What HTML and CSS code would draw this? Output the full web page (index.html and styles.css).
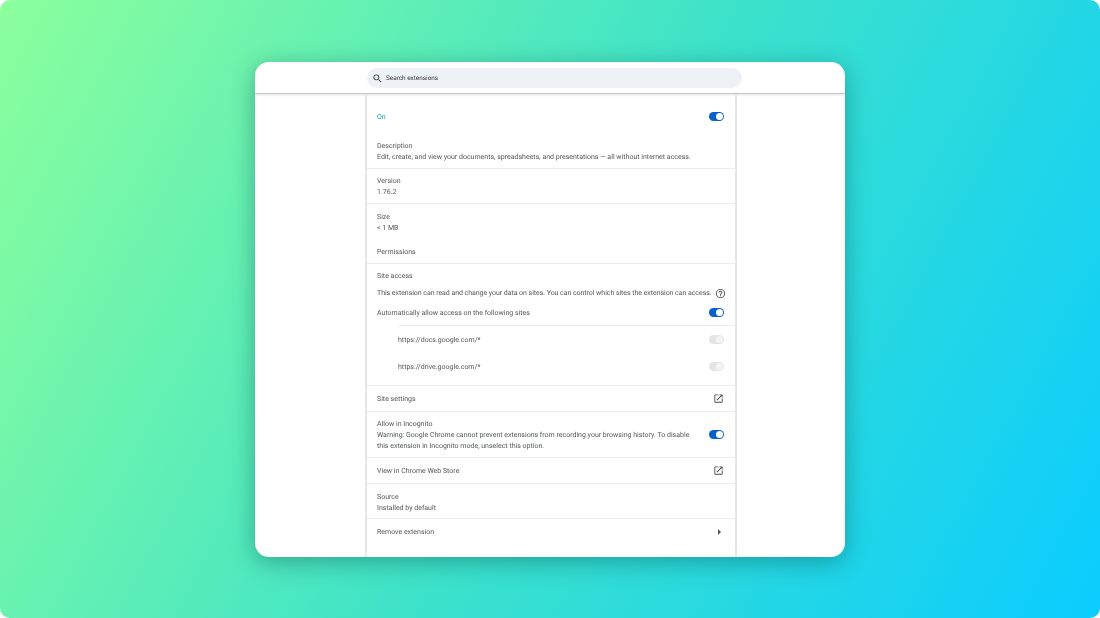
FILE: index.html
```html
<!DOCTYPE html>
<html lang="en">
  <head>
    <meta charset="UTF-8" />
    <meta name="viewport" content="width=device-width, initial-scale=1.0" />
    <title>Extension details</title>

    <link rel="stylesheet" href="styles.css">
  </head>

  <body>
    <div class="window">
      <header class="topbar">
        <div class="search">
          <svg class="search-icon" viewBox="0 0 24 24"><path d="M15.5 14h-.79l-.28-.27A6.47 6.47 0 0 0 16 9.5 6.5 6.5 0 1 0 9.5 16c1.61 0 3.09-.59 4.23-1.57l.27.28v.79l5 4.99L20.49 19l-4.99-5zm-6 0C7.01 14 5 11.99 5 9.5S7.01 5 9.5 5 14 7.01 14 9.5 11.99 14 9.5 14z"/></svg>
          <span>Search extensions</span>
        </div>
      </header>

      <div class="panel">
        <div class="row row-on">
          <span class="on-label">On</span>
          <span class="toggle"></span>
        </div>

        <div class="row row-desc line">
          <div>
            <p>Description</p>
            <p>Edit, create, and view your documents, spreadsheets, and presentations — all without internet access.</p>
          </div>
        </div>

        <div class="row row-version line">
          <div>
            <p>Version</p>
            <p>1.76.2</p>
          </div>
        </div>

        <div class="row row-info">
          <div>
            <p>Size</p>
            <p>&lt; 1 MB</p>
          </div>
        </div>

        <div class="row row-perm line">
          <p>Permissions</p>
        </div>

        <div class="access">
          <p class="access-title">Site access</p>
          <div class="access-text">
            <p>This extension can read and change your data on sites. You can control which sites the extension can access.</p>
            <svg class="help" viewBox="0 0 24 24"><path d="M11 18h2v-2h-2v2zm1-16a10 10 0 1 0 0 20 10 10 0 0 0 0-20zm0 18a8 8 0 1 1 0-16 8 8 0 0 1 0 16zm0-14a4 4 0 0 0-4 4h2a2 2 0 1 1 4 0c0 2-3 1.75-3 5h2c0-2.25 3-2.5 3-5a4 4 0 0 0-4-4z"/></svg>
          </div>
          <div class="auto">
            <p>Automatically allow access on the following sites</p>
            <span class="toggle"></span>
          </div>
          <div class="sites">
            <div class="site">
              <p>https://docs.google.com/*</p>
              <span class="toggle off"></span>
            </div>
            <div class="site">
              <p>https://drive.google.com/*</p>
              <span class="toggle off"></span>
            </div>
          </div>
        </div>

        <div class="row row-link line">
          <p class="link-text">Site settings</p>
          <svg class="open" viewBox="0 0 24 24"><path d="M19 19H5V5h7V3H5a2 2 0 0 0-2 2v14a2 2 0 0 0 2 2h14a2 2 0 0 0 2-2v-7h-2v7zM14 3v2h3.59l-9.83 9.83 1.41 1.41L19 6.41V10h2V3h-7z"/></svg>
        </div>

        <div class="row row-incognito line">
          <div class="incognito-text">
            <p>Allow in Incognito</p>
            <p>Warning: Google Chrome cannot prevent extensions from recording your browsing history. To disable this extension in Incognito mode, unselect this option.</p>
          </div>
          <span class="toggle"></span>
        </div>

        <div class="row row-link line">
          <p class="link-text">View in Chrome Web Store</p>
          <svg class="open" viewBox="0 0 24 24"><path d="M19 19H5V5h7V3H5a2 2 0 0 0-2 2v14a2 2 0 0 0 2 2h14a2 2 0 0 0 2-2v-7h-2v7zM14 3v2h3.59l-9.83 9.83 1.41 1.41L19 6.41V10h2V3h-7z"/></svg>
        </div>

        <div class="row row-source line">
          <div>
            <p>Source</p>
            <p>Installed by default</p>
          </div>
        </div>

        <div class="row row-link">
          <p>Remove extension</p>
          <span class="arrow"></span>
        </div>
      </div>
    </div>
  </body>
</html>
```

FILE: styles.css
```css
* {
  margin: 0;
  box-sizing: border-box;
}

html {
  background-color: #fff;
}

body {
  width: 1100px;
  height: 618px;
  overflow: hidden;
  border-radius: 10px;
  background: linear-gradient(118deg, #8cff9c 0%, #3fe3c8 50%, #0accff 100%);
  font-family: Roboto, "Liberation Sans", sans-serif;
  font-size: 7px;
  line-height: 11px;
  color: #55575a;
  text-rendering: geometricPrecision;

  display: flex;
  align-items: center;
  justify-content: center;
}

.window {
  width: 590px;
  height: 495px;
  margin-top: 1px;
  background-color: #fff;
  border-radius: 14px;
  overflow: hidden;
  box-shadow: 0 5px 24px rgba(0, 60, 60, 0.38);
  transform: translateZ(0);
}

.topbar {
  height: 32px;
  padding-top: 6px;
  padding-left: 112px;
  border-bottom: 1px solid #c6c8ca;
  box-shadow: 0 1px 2px rgba(0, 0, 0, 0.12);
}

.search {
  width: 375px;
  height: 20px;
  border-radius: 10px;
  background-color: #eef1f5;
  padding-left: 5px;
  font-size: 6.4px;
  color: #35373a;

  display: flex;
  align-items: center;
  gap: 3px;
}

.search-icon {
  width: 11px;
  height: 11px;
  fill: #3c4043;
}

.panel {
  width: 372px;
  height: 463px;
  margin-left: 110px;
  border-left: 2px solid #e6e7e9;
  border-right: 2px solid #e6e7e9;
}

.row {
  display: flex;
  align-items: center;
  justify-content: space-between;
  padding: 0 11px 0 10px;
}

.line {
  border-bottom: 1px solid #ebedef;
}

.row-on {
  height: 46px;
  padding-bottom: 2px;
}

.on-label {
  padding-top: 2px;
  color: #12a5b5;
}

.row-desc {
  height: 29px;
  padding-top: 1px;
  align-items: flex-start;
}

.row-version {
  height: 35px;
  padding-top: 7px;
  align-items: flex-start;
}

.row-info {
  height: 35px;
  padding-top: 8px;
  align-items: flex-start;
}

.row-source {
  height: 35px;
  padding-top: 7.5px;
  align-items: flex-start;
}

.row-perm {
  height: 25px;
  align-items: flex-start;
  padding-top: 8px;
}

.row-link {
  height: 26px;
}

.link-text,
.auto p,
.site p {
  padding-top: 2px;
}

.row-incognito {
  height: 46px;
}

.incognito-text {
  width: 322px;
  padding-top: 2px;
}

.access {
  height: 122px;
  border-bottom: 1px solid #ebedef;
  padding: 7px 0 0 10px;
}

.access-text {
  display: flex;
  align-items: center;
  gap: 3px;
  margin-top: 6px;
  letter-spacing: -0.05px;
}

.help {
  width: 11px;
  height: 11px;
  fill: #4a4c4f;
}

.auto {
  display: flex;
  align-items: center;
  justify-content: space-between;
  padding-right: 11px;
  margin-top: 8px;
  height: 11px;
}

.sites {
  margin-top: 7px;
  margin-left: 21px;
  border-top: 1px solid #ebedef;
}

.site {
  height: 27px;
  padding-right: 11px;

  display: flex;
  align-items: center;
  justify-content: space-between;
}

.toggle {
  position: relative;
  display: block;
  width: 15px;
  height: 9px;
  border-radius: 5px;
  background-color: #0b5fcc;
}

.toggle::after {
  content: "";
  position: absolute;
  top: 1px;
  right: 1px;
  width: 7px;
  height: 7px;
  border-radius: 50%;
  background-color: #fff;
}

.toggle.off {
  background-color: #e3e4e6;
}

.toggle.off::after {
  background-color: #f3f3f3;
}

.open {
  width: 11px;
  height: 11px;
  fill: #4a4c4f;
}

.arrow {
  width: 0;
  height: 0;
  margin-right: 3px;
  border-left: 3px solid #55575a;
  border-top: 3px solid transparent;
  border-bottom: 3px solid transparent;
}
```
